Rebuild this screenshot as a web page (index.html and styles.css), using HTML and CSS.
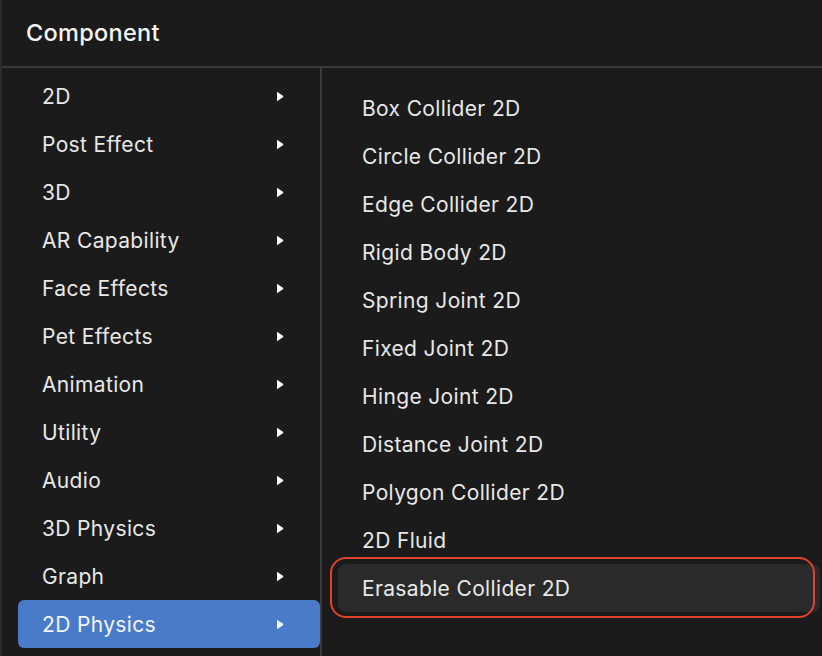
FILE: index.html
```html
<!DOCTYPE html>
<html>
<head>
<meta charset="utf-8">
<link rel="stylesheet" href="styles.css">
</head>
<body>
<div class="panel">
  <div class="header">Component</div>
  <div class="content">
    <ul class="menu menu-left">
      <li class="item"><span>2D</span><svg class="arrow" viewBox="0 0 8 11"><path d="M1 0.8 L7 4.8 Q7.6 5.5 7 6.2 L1 10.2 Z" fill="#fff"/></svg></li>
      <li class="item"><span>Post Effect</span><svg class="arrow" viewBox="0 0 8 11"><path d="M1 0.8 L7 4.8 Q7.6 5.5 7 6.2 L1 10.2 Z" fill="#fff"/></svg></li>
      <li class="item"><span>3D</span><svg class="arrow" viewBox="0 0 8 11"><path d="M1 0.8 L7 4.8 Q7.6 5.5 7 6.2 L1 10.2 Z" fill="#fff"/></svg></li>
      <li class="item"><span>AR Capability</span><svg class="arrow" viewBox="0 0 8 11"><path d="M1 0.8 L7 4.8 Q7.6 5.5 7 6.2 L1 10.2 Z" fill="#fff"/></svg></li>
      <li class="item"><span>Face Effects</span><svg class="arrow" viewBox="0 0 8 11"><path d="M1 0.8 L7 4.8 Q7.6 5.5 7 6.2 L1 10.2 Z" fill="#fff"/></svg></li>
      <li class="item"><span>Pet Effects</span><svg class="arrow" viewBox="0 0 8 11"><path d="M1 0.8 L7 4.8 Q7.6 5.5 7 6.2 L1 10.2 Z" fill="#fff"/></svg></li>
      <li class="item"><span>Animation</span><svg class="arrow" viewBox="0 0 8 11"><path d="M1 0.8 L7 4.8 Q7.6 5.5 7 6.2 L1 10.2 Z" fill="#fff"/></svg></li>
      <li class="item"><span>Utility</span><svg class="arrow" viewBox="0 0 8 11"><path d="M1 0.8 L7 4.8 Q7.6 5.5 7 6.2 L1 10.2 Z" fill="#fff"/></svg></li>
      <li class="item"><span>Audio</span><svg class="arrow" viewBox="0 0 8 11"><path d="M1 0.8 L7 4.8 Q7.6 5.5 7 6.2 L1 10.2 Z" fill="#fff"/></svg></li>
      <li class="item"><span>3D Physics</span><svg class="arrow" viewBox="0 0 8 11"><path d="M1 0.8 L7 4.8 Q7.6 5.5 7 6.2 L1 10.2 Z" fill="#fff"/></svg></li>
      <li class="item"><span>Graph</span><svg class="arrow" viewBox="0 0 8 11"><path d="M1 0.8 L7 4.8 Q7.6 5.5 7 6.2 L1 10.2 Z" fill="#fff"/></svg></li>
      <li class="item selected"><span>2D Physics</span><svg class="arrow" viewBox="0 0 8 11"><path d="M1 0.8 L7 4.8 Q7.6 5.5 7 6.2 L1 10.2 Z" fill="#fff"/></svg></li>
    </ul>
    <ul class="menu menu-right">
      <li class="item">Box Collider 2D</li>
      <li class="item">Circle Collider 2D</li>
      <li class="item">Edge Collider 2D</li>
      <li class="item">Rigid Body 2D</li>
      <li class="item">Spring Joint 2D</li>
      <li class="item">Fixed Joint 2D</li>
      <li class="item">Hinge Joint 2D</li>
      <li class="item">Distance Joint 2D</li>
      <li class="item">Polygon Collider 2D</li>
      <li class="item">2D Fluid</li>
      <li class="item hover">Erasable Collider 2D</li>
    </ul>
  </div>
</div>
</body>
</html>
```

FILE: styles.css
```css
* { box-sizing: border-box; }
html, body {
  margin: 0;
  padding: 0;
  background: #1b1b1b;
  width: 822px;
  height: 656px;
  overflow: hidden;
}
body {
  font-family: "Inter", "Noto Sans", sans-serif;
  color: #e8e8e8;
}
.panel {
  height: 656px;
  border-left: 2px solid #2c2c2c;
  display: flex;
  flex-direction: column;
}
.header {
  height: 68px;
  border-bottom: 2px solid #3a3a3a;
  padding-left: 24px;
  display: flex;
  align-items: center;
  font-size: 23.5px;
  font-weight: 500;
  letter-spacing: 0.3px;
  color: #f4f4f4;
  padding-bottom: 2px;
}
.content {
  flex: 1;
  display: flex;
  min-height: 0;
}
.menu {
  list-style: none;
  margin: 0;
}
.menu-left {
  width: 320px;
  border-right: 2px solid #3a3a3a;
  padding: 4px 0 0 16px;
}
.menu-right {
  flex: 1;
  padding: 16px 2px 0 16px;
}
.item {
  height: 48px;
  display: flex;
  align-items: center;
  font-size: 21px;
  font-weight: 400;
  padding-left: 24px;
  letter-spacing: 0.35px;
}
.menu-left .item {
  justify-content: space-between;
  padding-right: 36px;
  border-radius: 6px;
}
.menu-right .item {
  padding-left: 24px;
  border-radius: 8px;
}
.arrow {
  width: 8px;
  height: 11px;
  display: block;
}
.item.selected {
  background: #4a7bc8;
  color: #f2f5fb;
}
.item.hover {
  background: #2a2a2a;
  position: relative;
}
.item.hover::after {
  content: "";
  position: absolute;
  left: -8px;
  top: -7px;
  right: 5px;
  bottom: -6px;
  border: 2.5px solid #e2432c;
  border-radius: 16px;
}
```
